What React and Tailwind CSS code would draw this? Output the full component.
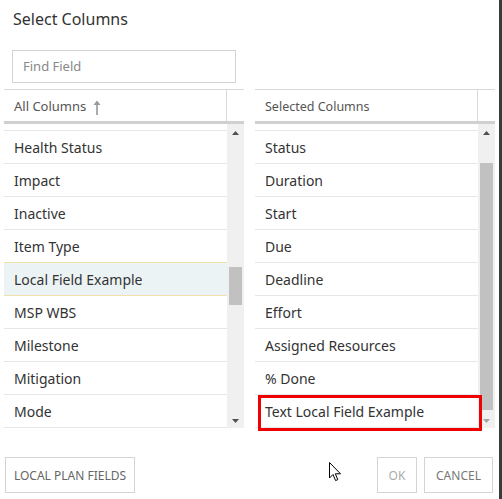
const allColumns = [
  "Health Status",
  "Impact",
  "Inactive",
  "Item Type",
  "Local Field Example",
  "MSP WBS",
  "Milestone",
  "Mitigation",
  "Mode",
]

const selectedColumns = [
  "Status",
  "Duration",
  "Start",
  "Due",
  "Deadline",
  "Effort",
  "Assigned Resources",
  "% Done",
  "Text Local Field Example",
]

export default function App() {
  return (
    <div className="relative flex h-[499px] w-[502px] overflow-hidden bg-white font-['Noto_Sans','Open_Sans',sans-serif] text-[#333]">
      <div className="flex-1">
        <h1 className="px-[13px] pt-[8px] text-[16px] leading-[22px]">Select Columns</h1>

        <div className="mt-[20px] ml-[12px] flex h-[33px] w-[224px] items-center border border-[#d4d4d4] px-[10px] text-[13px] text-[#888]">
          Find Field
        </div>

        <div className="mt-[6px] flex gap-[11px] pl-[4px]">
          <Grid
            title={
              <span className="flex items-center gap-[7px] text-[13px] text-[#555]">
                All Columns
                <SortArrow />
              </span>
            }
            rows={allColumns}
            highlighted="Local Field Example"
            thumbTop={143}
            thumbHeight={38}
            downDark
          />
          <Grid
            title={<span className="text-[12.5px] text-[#555]">Selected Columns</span>}
            rows={selectedColumns}
            boxed
            thumbTop={39}
            thumbHeight={247}
          />
        </div>

        <div className="mt-[29px] flex items-center pr-[6px] pl-[5px]">
          <button className="h-[36px] w-[130px] border border-[#d4d4d4] pt-px text-[12px] text-[#666]">
            LOCAL PLAN FIELDS
          </button>
          <div className="flex-1" />
          <button className="h-[36px] w-[40px] border border-[#d4d4d4] pt-px text-[12px] text-[#aaa]">
            OK
          </button>
          <button className="ml-[7px] h-[36px] w-[69px] border border-[#d4d4d4] pt-px text-[12px] text-[#777]">
            CANCEL
          </button>
        </div>
      </div>
      <div className="w-[3px] bg-[#3b3b3b]" />

      <Cursor />
    </div>
  )
}

function Grid({ title, rows, highlighted, boxed, thumbTop, thumbHeight, downDark }) {
  return (
    <div className="w-[240px]">
      <div className="flex h-[32px] border-t border-[#d9d9d9]">
        <div className="flex flex-1 items-center pt-[3px] pl-[10px]">{title}</div>
        <div className="w-[18px] border-l border-[#d9d9d9]" />
      </div>
      <div className="h-[3px] bg-[#d0d0d0]" />
      <div className="relative flex h-[304px]">
        <div className="flex-1 overflow-hidden">
          <div className="h-[7px] border-b border-[#e6e6e6]" />
          {rows.map((r) => (
            <div
              key={r}
              className={
                "flex h-[33px] items-center border-b pl-[10px] text-[14px] " +
                (r === highlighted
                  ? "-mt-px h-[34px] border-t border-[#f0e0ae] border-b-[#f0e0ae] bg-[#ecf3f5]"
                  : "border-[#e6e6e6]")
              }
            >
              {r}
            </div>
          ))}
        </div>
        <div className="relative w-[17px] bg-[#f0f0f0]">
          <svg className="absolute top-[7px] left-[5px]" width="7" height="4" viewBox="0 0 7 4">
            <path d="M0 4 L3.5 0 L7 4 Z" fill="#505050" />
          </svg>
          <div
            className="absolute left-[2px] w-[13px] bg-[#c1c1c1]"
            style={{ top: thumbTop, height: thumbHeight }}
          />
          <svg className="absolute bottom-[5px] left-[5px]" width="7" height="4" viewBox="0 0 7 4">
            <path d="M0 0 L7 0 L3.5 4 Z" fill={downDark ? "#505050" : "#a3a3a3"} />
          </svg>
        </div>
        {boxed ? (
          <div className="absolute top-[271px] left-[3px] h-[36px] w-[224px] border-[3px] border-[#f00000]" />
        ) : null}
      </div>
    </div>
  )
}

function SortArrow() {
  return (
    <svg width="8" height="15" viewBox="0 0 8 15" aria-hidden="true">
      <path d="M4 2 V15" stroke="#999" strokeWidth="1.6" />
      <path d="M0.5 5 L4 0.5 L7.5 5 Z" fill="#999" />
    </svg>
  )
}

function Cursor() {
  return (
    <svg className="absolute top-[462px] left-[329px]" width="13" height="20" viewBox="0 0 13 20" aria-hidden="true">
      <path
        d="M0.5 0.5 V16 L4 12.5 L6.6 18.6 L8.8 17.6 L6.3 11.8 H11.5 Z"
        fill="#fff"
        stroke="#000"
        strokeWidth="1"
        strokeLinejoin="round"
      />
    </svg>
  )
}
